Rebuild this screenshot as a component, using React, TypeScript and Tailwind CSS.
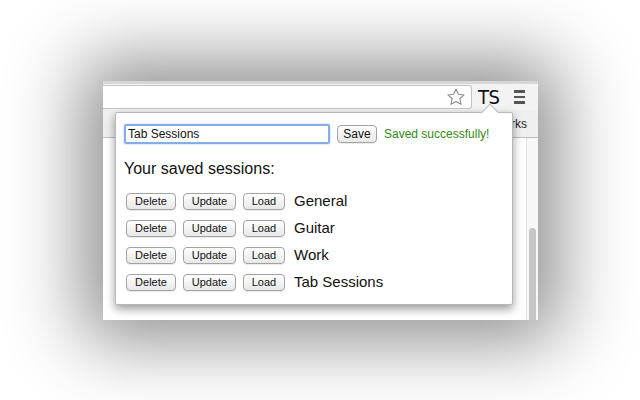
import React from 'react';

const SESSIONS = ['General', 'Guitar', 'Work', 'Tab Sessions'];

const btn =
  'h-[17px] rounded-[4px] border border-[#a3a3a3] bg-gradient-to-b from-white to-[#e8e8e8] text-[11px] leading-none text-[#111] shadow-[0_1px_0_rgba(0,0,0,0.08)] flex items-center justify-center';

export default function App() {
  return (
    <div className="w-[640px] h-[400px] bg-white overflow-hidden pl-[103px] pt-[81px] font-['Liberation_Sans',Arial,sans-serif]">
      {/* browser window */}
      <div className="relative w-[435px] h-[239px] bg-white flex flex-col shadow-[0_0_70px_20px_rgba(0,0,0,0.45)]">
        {/* toolbar */}
        <div className="h-[29px] bg-[#f3f3f3] border-t-[3px] border-[#d6d6d6] flex items-center">
          <div className="w-[369px] h-[24px] bg-white border border-l-0 border-[#c4c4c4] rounded-r-[3px] flex items-center justify-end pr-[5px]">
            <svg width="20" height="20" viewBox="0 0 24 24" fill="none" stroke="#8a8a8a" strokeWidth="1.3" strokeLinejoin="round">
              <path d="M12 2.5l2.9 6.3 6.8.7-5.1 4.6 1.5 6.7L12 17.4l-6.1 3.4 1.5-6.7-5.1-4.6 6.8-.7z" />
            </svg>
          </div>
          <span className="ml-[6px] text-[20px] font-normal text-[#111] tracking-[-0.5px] leading-none font-['DejaVu_Sans_Condensed','DejaVu_Sans',sans-serif]">TS</span>
          <div className="ml-[15px] flex flex-col gap-[3px]">
            <div className="w-[11px] h-[2.5px] bg-[#555]" />
            <div className="w-[11px] h-[2.5px] bg-[#555]" />
            <div className="w-[11px] h-[2.5px] bg-[#555]" />
          </div>
        </div>
        {/* bookmarks bar */}
        <div className="h-[28px] bg-[#efefef] border-b border-[#bdbdbd] flex items-center justify-end pr-[11px]">
          <span className="text-[12px] text-[#222]">rks</span>
        </div>
        {/* content */}
        <div className="flex-1 flex justify-end">
          <div className="w-[12px] border-l border-[#e3e3e3] bg-[#f7f7f7] flex flex-col pt-[90px] items-center">
            <div className="w-[7px] flex-1 rounded-t-full bg-[#c6c6c6]" />
          </div>
        </div>

        {/* popup */}
        <div className="absolute left-[12px] top-[31px] w-[398px] h-[193px] bg-white border border-[#b8b8b8] rounded-[2px] shadow-[0_4px_10px_rgba(0,0,0,0.4)] pl-[8px] pt-[11px]">
          <div className="absolute -top-[7px] left-[368px] w-[12px] h-[12px] bg-white border-l border-t border-[#b8b8b8] rotate-45" />
          <div className="relative flex items-center">
            <div className="w-[206px] h-[20px] border-2 border-[#85aee8] rounded-[2px] shadow-[0_0_2px_#9ec1f0] flex items-center pl-[2px] text-[12px] text-[#111]">
              Tab Sessions
            </div>
            <div className={`${btn} ml-[7px] w-[40px] h-[18px] text-[12px]`}>Save</div>
            <span className="ml-[7px] text-[12px] text-[#2f8a12]">Saved successfully!</span>
          </div>
          <div className="mt-[17px] text-[16px] text-[#111] leading-none">Your saved sessions:</div>
          <div className="mt-[16px] ml-[2px] flex flex-col gap-[10px]">
            {SESSIONS.map((name) => (
              <div key={name} className="flex items-center">
                <div className={`${btn} w-[50px]`}>Delete</div>
                <div className={`${btn} ml-[7px] w-[53px]`}>Update</div>
                <div className={`${btn} ml-[7px] w-[42px]`}>Load</div>
                <span className="ml-[9px] text-[15px] text-[#111] leading-none -mt-[2px]">{name}</span>
              </div>
            ))}
          </div>
        </div>
      </div>
    </div>
  );
}
